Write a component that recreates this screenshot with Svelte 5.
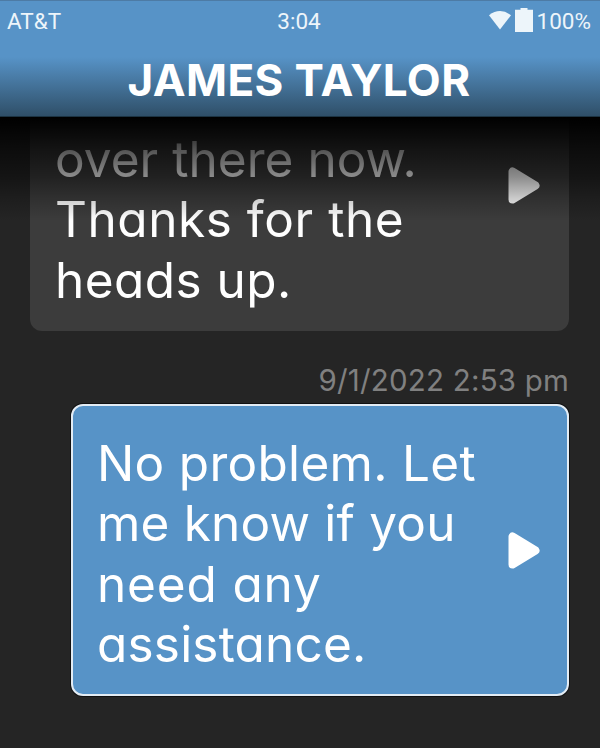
<script>
  const received = [
    { text: 'over there now.', spacing: 0.05 },
    { text: 'Thanks for the', spacing: 0.55 },
    { text: 'heads up.', spacing: 0.45 }
  ];
  const sent = [
    { text: 'No problem. Let', spacing: 0.3 },
    { text: 'me know if you', spacing: 0.2 },
    { text: 'need any', spacing: 0.85 },
    { text: 'assistance.', spacing: 0.2 }
  ];
</script>

{#snippet play()}
  <svg class="play" viewBox="0 0 32 37" width="32" height="37">
    <path d="M4.5 4.5V32.5L27.5 18.5Z" fill="#fff" stroke="#fff" stroke-width="8" stroke-linejoin="round" />
  </svg>
{/snippet}

<div class="screen">
  <header>
    <div class="status">
      <span class="carrier">AT&amp;T</span>
      <span class="time">3:04</span>
      <span class="indicators">
        <svg class="wifi" viewBox="0 0 22 19" width="22" height="19">
          <path d="M0 4.2Q11-4.2 22 4.2L11 18.6Z" fill="#edf5fa" />
        </svg>
        <svg class="battery" viewBox="0 0 18 24" width="18" height="24">
          <path d="M0 1.7H5.5V0H12.5V1.7H18V24H0Z" fill="#edf5fa" />
        </svg>
        <span class="percent">100%</span>
      </span>
    </div>
    <h1>JAMES TAYLOR</h1>
  </header>

  <main>
    <section class="bubble received">
      <p>
        {#each received as line}
          <span style="letter-spacing: {line.spacing}px">{line.text}</span>
        {/each}
      </p>
      {@render play()}
    </section>
    <time>9/1/2022 2:53 pm</time>
    <section class="bubble sent">
      <p>
        {#each sent as line}
          <span style="letter-spacing: {line.spacing}px">{line.text}</span>
        {/each}
      </p>
      {@render play()}
    </section>
    <div class="fade"></div>
  </main>
</div>

<style>
  :global(body) { margin: 0; background: #252525; }
  .screen {
    display: flex;
    flex-direction: column;
    width: 600px;
    height: 748px;
    overflow: hidden;
    background: #252525;
    font-family: Inter, "Liberation Sans", sans-serif;
    font-feature-settings: "cv11";
  }
  header {
    height: 117px;
    box-sizing: border-box;
    border-top: 1px solid #4d7ba5;
    border-bottom: 1px solid #1c3342;
    background: linear-gradient(#5793c7 0 56px, #2f4f68 115px);
    flex: none;
  }
  .status {
    display: grid;
    grid-template-columns: 1fr auto 1fr;
    height: 42px;
    padding: 0 9px 0 7px;
    align-items: center;
    font: 22.5px/40px Roboto, sans-serif;
    color: #edf5fa;
  }
  .carrier, .time, .percent { margin-top: -2px; }
  .indicators { display: flex; justify-content: flex-end; align-items: center; }
  .wifi { margin-right: 4px; margin-top: -4px; }
  .battery { margin-right: 4px; margin-top: -4px; }
  h1 {
    margin: 0;
    text-align: center;
    color: #fff;
    font-size: 44px;
    line-height: 75px;
    font-weight: 700;
    letter-spacing: 0.4px;
    text-indent: -2px;
    white-space: nowrap;
  }
  main {
    position: relative;
    flex: 1;
    display: flex;
    flex-direction: column;
    align-items: flex-end;
    padding: 0 31px 0 30px;
  }
  .bubble {
    box-sizing: border-box;
    display: flex;
    justify-content: space-between;
    color: #fff;
  }
  .received {
    width: 539px;
    height: 214px;
    padding: 12px 29px 0 25px;
    border-radius: 0 0 12px 12px;
    background: #3c3c3c;
  }
  .received .play { margin-top: 38px; }
  .sent {
    width: 498px;
    height: 292px;
    padding: 27px 27px 0 24px;
    border: 2px solid #e3ecf4;
    border-radius: 12px;
    background: #5793c7;
    box-shadow: 0 0 0 1px #111;
  }
  .sent .play { margin-top: 99px; }
  .play { flex: none; }
  p {
    margin: 0;
    font-size: 49.5px;
    line-height: 60.4px;
    font-weight: 400;
  }
  p span { display: block; white-space: nowrap; }
  time {
    height: 73px;
    box-sizing: border-box;
    padding-top: 31px;
    font-size: 29.5px;
    line-height: 36px;
    font-weight: 400;
    letter-spacing: 0.2px;
    color: #808080;
    white-space: nowrap;
  }
  .fade {
    position: absolute;
    inset: 0 0 auto 0;
    height: 104px;
    background: linear-gradient(#000 0, rgba(0, 0, 0, .68) 32px, rgba(0, 0, 0, .45) 60px, rgba(0, 0, 0, .2) 82px, transparent);
  }
</style>
